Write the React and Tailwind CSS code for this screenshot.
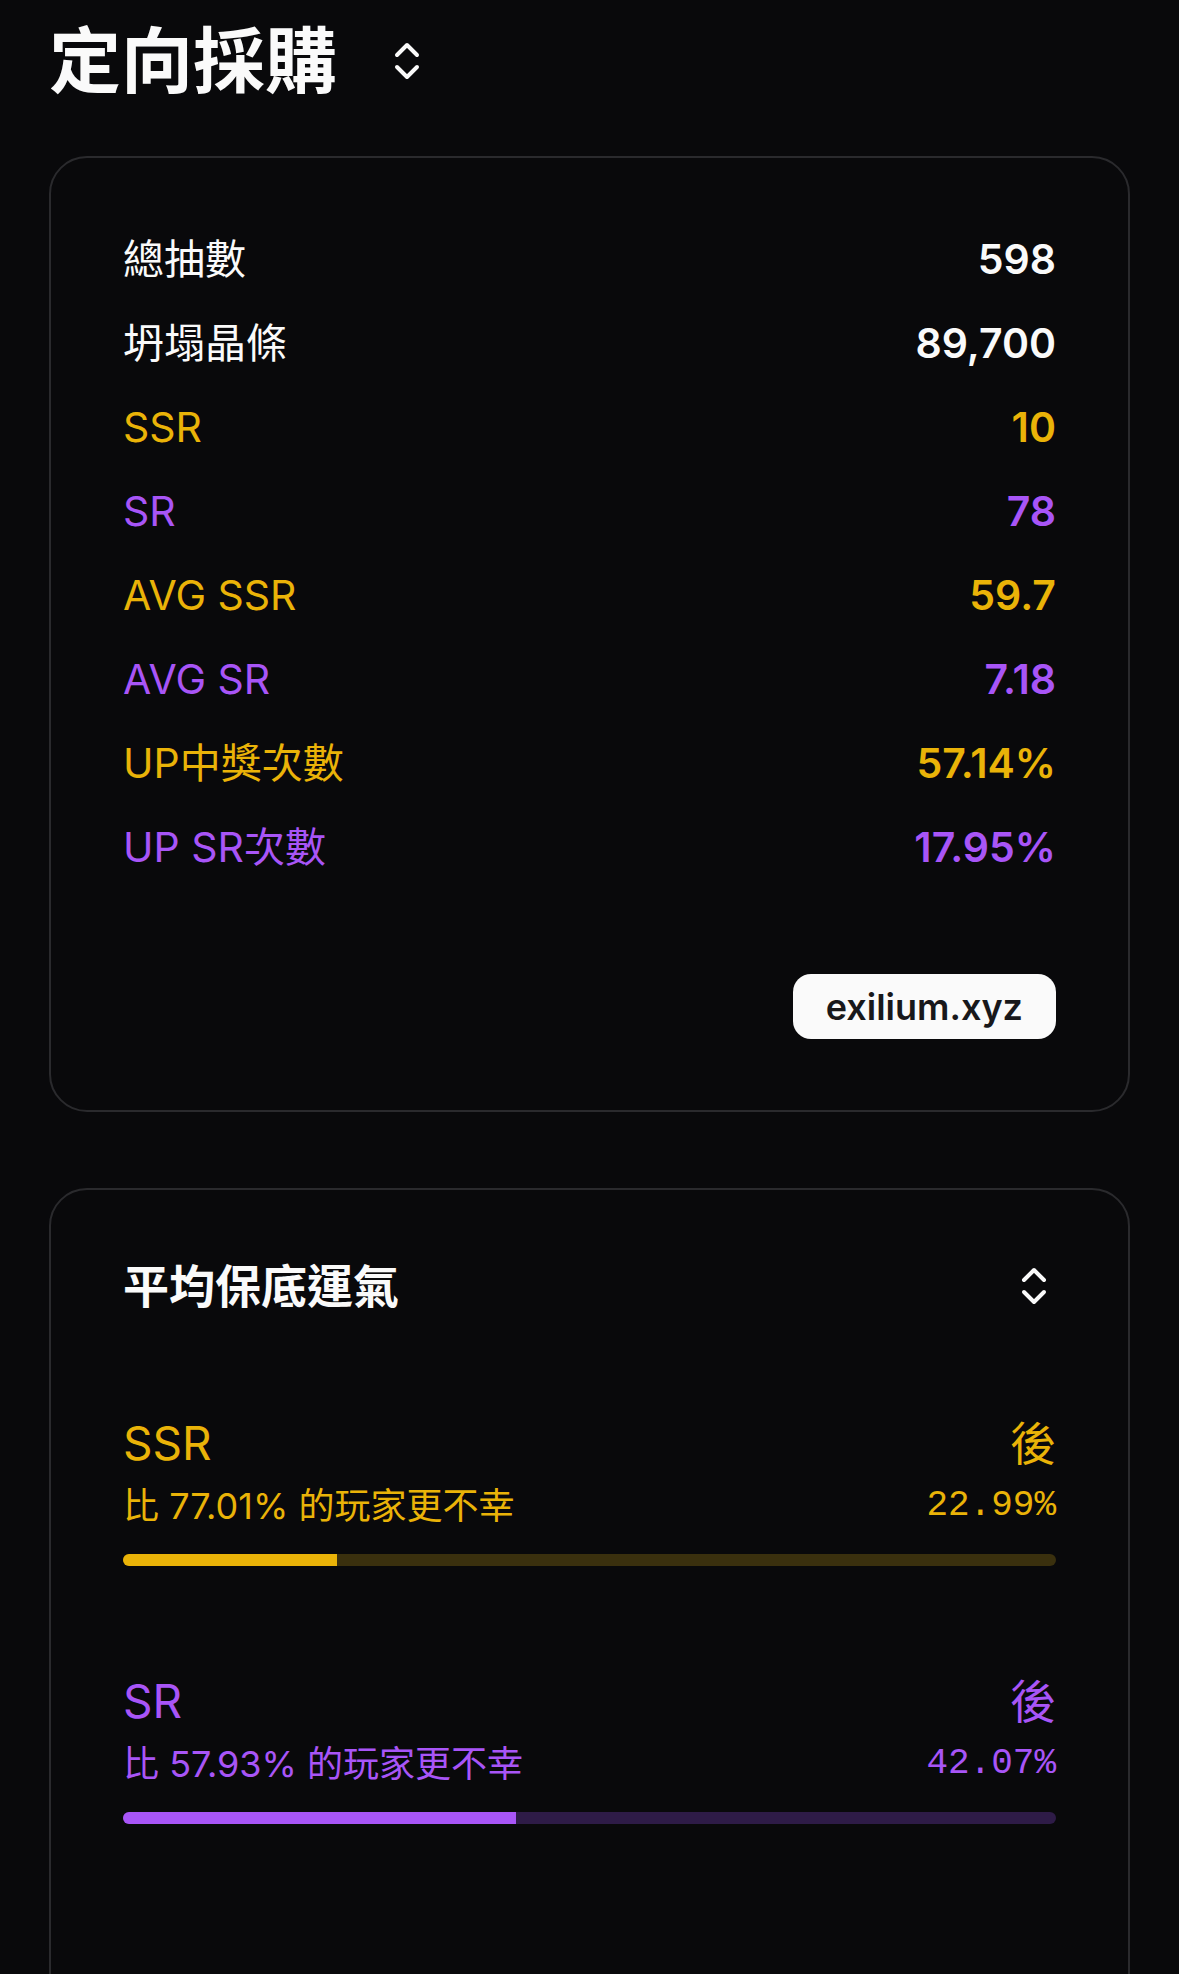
import React from 'react';
import { ChevronsUpDown } from 'lucide-react';

const stats = [
  { label: '總抽數', value: '598', color: 'text-[#fafafa]' },
  { label: '坍塌晶條', value: '89,700', color: 'text-[#fafafa]' },
  { label: 'SSR', value: '10', color: 'text-[#eab308]' },
  { label: 'SR', value: '78', color: 'text-[#a855f7]' },
  { label: 'AVG SSR', value: '59.7', color: 'text-[#eab308]' },
  { label: 'AVG SR', value: '7.18', color: 'text-[#a855f7]' },
  { label: 'UP中獎次數', value: '57.14%', color: 'text-[#eab308]' },
  { label: 'UP SR次數', value: '17.95%', color: 'text-[#a855f7]' },
];

const luck = [
  {
    name: 'SSR',
    worse: '77.01%',
    rank: '22.99%',
    pct: 22.99,
    text: 'text-[#eab308]',
    fill: 'bg-[#eab308]',
    track: 'bg-[#3a300e]',
  },
  {
    name: 'SR',
    worse: '57.93%',
    rank: '42.07%',
    pct: 42.07,
    text: 'text-[#a855f7]',
    fill: 'bg-[#a855f7]',
    track: 'bg-[#2e1b47]',
  },
];

const LuckBlock = ({ item }) => (
  <div className={`flex flex-col ${item.text}`}>
    <div className="flex h-[56px] items-center justify-between text-[46px] leading-[56px]">
      <span>{item.name}</span>
      <span>後</span>
    </div>
    <div className="mt-[13px] flex h-[44px] items-center justify-between">
      <span className="text-[36px] leading-[44px]">比 {item.worse} 的玩家更不幸</span>
      <span className="font-['Liberation_Mono',monospace] text-[36px] leading-[44px]">{item.rank}</span>
    </div>
    <div className={`mt-[26px] h-[12px] w-full overflow-hidden rounded-full ${item.track}`}>
      <div className={`h-full ${item.fill}`} style={{ width: `${item.pct}%` }} />
    </div>
  </div>
);

export default function App() {
  return (
    <div className="min-h-screen bg-[#09090b] px-[49px] pt-[25px] font-['Inter','Noto_Sans_CJK_TC',sans-serif] text-[#fafafa]">
      {/* title */}
      <div className="flex items-center gap-[46px]">
        <h1 className="text-[72px] font-bold leading-[72px]">定向採購</h1>
        <ChevronsUpDown size={48} strokeWidth={2} className="text-[#fafafa]" />
      </div>

      {/* stats card */}
      <div className="mt-[59px] rounded-[38px] border-2 border-[#2a2a2d] bg-[#09090b] px-[72px] pb-[71px] pt-[71px]">
        <div className="flex flex-col gap-[24px]">
          {stats.map((s) => (
            <div key={s.label} className={`flex items-center justify-between text-[41px] leading-[60px] ${s.color}`}>
              <span>{s.label}</span>
              <span className="font-semibold">{s.value}</span>
            </div>
          ))}
        </div>
        <div className="mt-[97px] flex justify-end">
          <div className="flex h-[65px] items-center rounded-[18px] bg-[#fafafa] px-[33px] text-[36px] font-semibold text-[#18181b]">
            exilium.xyz
          </div>
        </div>
      </div>

      {/* luck card */}
      <div className="mt-[76px] rounded-[38px] border-2 border-[#2a2a2d] bg-[#09090b] px-[72px] pb-[240px] pt-[72px]">
        <div className="flex h-[48px] items-center justify-between">
          <h2 className="text-[46px] font-bold leading-[48px]">平均保底運氣</h2>
          <ChevronsUpDown size={48} strokeWidth={2} className="-mr-[2px] text-[#fafafa]" />
        </div>
        <div className="mt-[105px] flex flex-col gap-[107px]">
          {luck.map((item) => (
            <LuckBlock key={item.name} item={item} />
          ))}
        </div>
      </div>
    </div>
  );
}
